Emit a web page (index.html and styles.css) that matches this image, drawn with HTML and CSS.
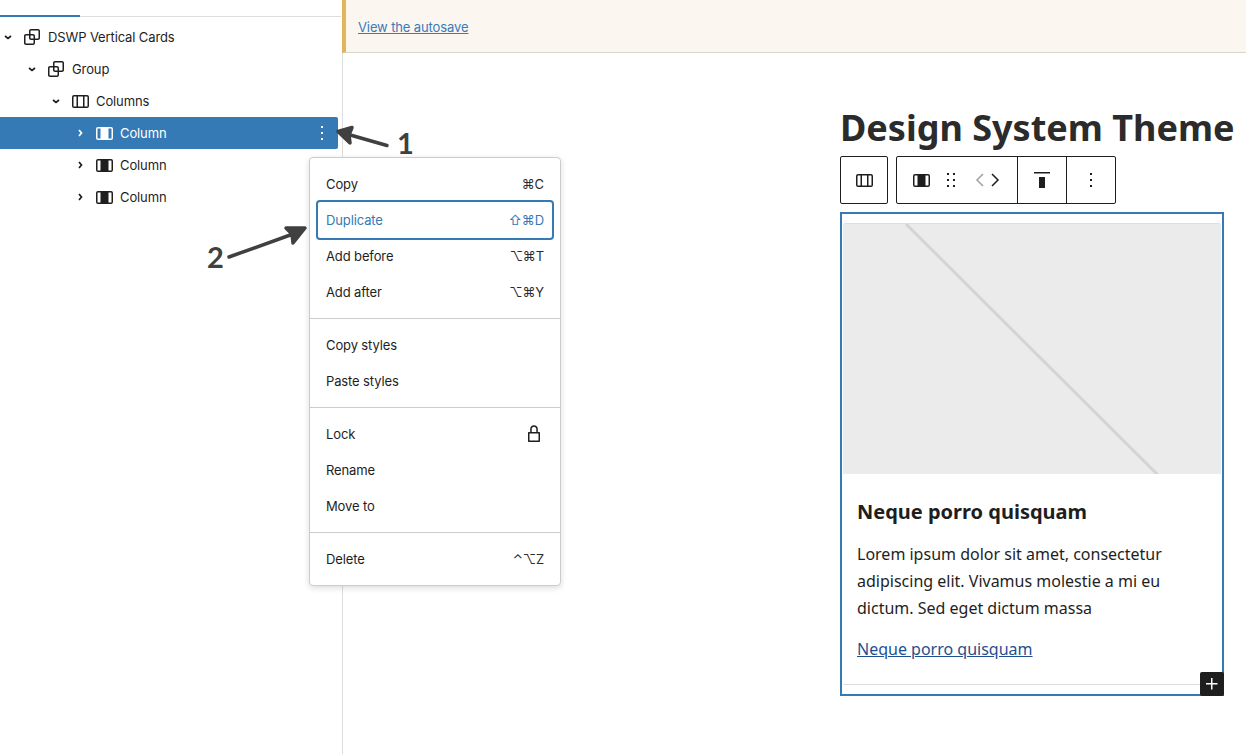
FILE: index.html
```html
<!DOCTYPE html>
<html lang="en">
<head>
<meta charset="utf-8">
<title>List view block menu</title>
<link rel="stylesheet" href="styles.css">
</head>
<body>
<div class="app">
  <aside class="sidebar">
    <div class="tabs"><span class="tab-active"></span></div>
    <ul class="tree">
      <li class="row level-1">
        <svg class="chev" viewBox="0 0 16 16"><path d="M5 7l3 2.500L11 7"/></svg>
        <svg class="icon" viewBox="0 0 24 24"><path d="M18 4h-7c-1.100 0-2 .9-2 2v3H6c-1.100 0-2 .9-2 2v7c0 1.100.9 2 2 2h7c1.100 0 2-.9 2-2v-3h3c1.100 0 2-.9 2-2V6c0-1.100-.9-2-2-2zm-4.500 14c0 .3-.2.5-.5.5H6c-.3 0-.5-.2-.5-.5v-7c0-.3.2-.5.5-.5h3V13c0 1.100.9 2 2 2h2.500v3zm0-4.500H11c-.3 0-.5-.2-.5-.5v-2.500H13c.3 0 .5.2.5.5v2.500zm5-.5c0 .3-.2.5-.5.5h-3V11c0-1.100-.9-2-2-2h-2.500V6c0-.3.2-.5.5-.5h7c.3 0 .5.2.5.5v7z"/></svg>
        <span>DSWP Vertical Cards</span>
      </li>
      <li class="row level-2">
        <svg class="chev" viewBox="0 0 16 16"><path d="M5 7l3 2.500L11 7"/></svg>
        <svg class="icon" viewBox="0 0 24 24"><path d="M18 4h-7c-1.100 0-2 .9-2 2v3H6c-1.100 0-2 .9-2 2v7c0 1.100.9 2 2 2h7c1.100 0 2-.9 2-2v-3h3c1.100 0 2-.9 2-2V6c0-1.100-.9-2-2-2zm-4.500 14c0 .3-.2.5-.5.5H6c-.3 0-.5-.2-.5-.5v-7c0-.3.2-.5.5-.5h3V13c0 1.100.9 2 2 2h2.500v3zm0-4.500H11c-.3 0-.5-.2-.5-.5v-2.500H13c.3 0 .5.2.5.5v2.500zm5-.5c0 .3-.2.5-.5.5h-3V11c0-1.100-.9-2-2-2h-2.500V6c0-.3.2-.5.5-.5h7c.3 0 .5.2.5.5v7z"/></svg>
        <span>Group</span>
      </li>
      <li class="row level-3">
        <svg class="chev" viewBox="0 0 16 16"><path d="M5 7l3 2.500L11 7"/></svg>
        <svg class="icon" viewBox="0 0 24 24"><path fill-rule="evenodd" d="M15 7.500h-5v10h5v-10Zm1.500 0v10H19a.5.5 0 0 0 .5-.5V8a.5.5 0 0 0-.5-.5h-2.500ZM6 7.500h2.500v10H6a.5.5 0 0 1-.5-.5V8a.5.5 0 0 1 .5-.5ZM6 6h13a2 2 0 0 1 2 2v9a2 2 0 0 1-2 2H6a2 2 0 0 1-2-2V8a2 2 0 0 1 2-2Z"/></svg>
        <span>Columns</span>
      </li>
      <li class="row level-4 selected">
        <svg class="chev" viewBox="0 0 16 16"><path d="M7 5l2.500 3L7 11"/></svg>
        <svg class="icon" viewBox="0 0 24 24"><path fill-rule="evenodd" d="M6 6h13a2 2 0 0 1 2 2v9a2 2 0 0 1-2 2H6a2 2 0 0 1-2-2V8a2 2 0 0 1 2-2Zm0 1.500a.5.5 0 0 0-.5.5v9a.5.5 0 0 0 .5.5h2.500v-10H6Zm10.500 0v10H19a.5.5 0 0 0 .5-.5V8a.5.5 0 0 0-.5-.5h-2.500Z"/></svg>
        <span class="row-label">Column</span>
        <svg class="icon" viewBox="0 0 24 24"><path d="M13 19h-2v-2h2v2zm0-6h-2v-2h2v2zm0-6h-2V5h2v2z"/></svg>
      </li>
      <li class="row level-4">
        <svg class="chev" viewBox="0 0 16 16"><path d="M7 5l2.500 3L7 11"/></svg>
        <svg class="icon" viewBox="0 0 24 24"><path fill-rule="evenodd" d="M6 6h13a2 2 0 0 1 2 2v9a2 2 0 0 1-2 2H6a2 2 0 0 1-2-2V8a2 2 0 0 1 2-2Zm0 1.500a.5.5 0 0 0-.5.5v9a.5.5 0 0 0 .5.5h2.500v-10H6Zm10.500 0v10H19a.5.5 0 0 0 .5-.5V8a.5.5 0 0 0-.5-.5h-2.500Z"/></svg>
        <span>Column</span>
      </li>
      <li class="row level-4">
        <svg class="chev" viewBox="0 0 16 16"><path d="M7 5l2.500 3L7 11"/></svg>
        <svg class="icon" viewBox="0 0 24 24"><path fill-rule="evenodd" d="M6 6h13a2 2 0 0 1 2 2v9a2 2 0 0 1-2 2H6a2 2 0 0 1-2-2V8a2 2 0 0 1 2-2Zm0 1.500a.5.5 0 0 0-.5.5v9a.5.5 0 0 0 .5.5h2.500v-10H6Zm10.500 0v10H19a.5.5 0 0 0 .5-.5V8a.5.5 0 0 0-.5-.5h-2.500Z"/></svg>
        <span>Column</span>
      </li>
    </ul>
  </aside>

  <main class="main">
    <div class="notice">
      <a class="notice-link" href="#">View the autosave</a>
    </div>
    <div class="canvas">
      <h1 class="title">Design System Theme</h1>
      <div class="toolbar">
        <div class="tool-group tool-parent">
          <svg class="icon" viewBox="0 0 24 24"><path fill-rule="evenodd" d="M15 7.500h-5v10h5v-10Zm1.500 0v10H19a.5.5 0 0 0 .5-.5V8a.5.5 0 0 0-.5-.5h-2.500ZM6 7.500h2.500v10H6a.5.5 0 0 1-.5-.5V8a.5.5 0 0 1 .5-.5ZM6 6h13a2 2 0 0 1 2 2v9a2 2 0 0 1-2 2H6a2 2 0 0 1-2-2V8a2 2 0 0 1 2-2Z"/></svg>
        </div>
        <div class="tool-group">
          <div class="tool-section tool-block">
            <svg class="icon" viewBox="0 0 24 24"><path fill-rule="evenodd" d="M6 6h13a2 2 0 0 1 2 2v9a2 2 0 0 1-2 2H6a2 2 0 0 1-2-2V8a2 2 0 0 1 2-2Zm0 1.500a.5.5 0 0 0-.5.5v9a.5.5 0 0 0 .5.5h2.500v-10H6Zm10.500 0v10H19a.5.5 0 0 0 .5-.5V8a.5.5 0 0 0-.5-.5h-2.500Z"/></svg>
            <svg class="icon drag" viewBox="0 0 24 24"><path d="M8 7h2V5H8v2zm0 6h2v-2H8v2zm0 6h2v-2H8v2zm6-14v2h2V5h-2zm0 8h2v-2h-2v2zm0 6h2v-2h-2v2z"/></svg>
            <svg class="arrow-btn arrow-prev" viewBox="0 0 12 16"><path d="M9 2L3 8l6 6"/></svg>
            <svg class="arrow-btn arrow-next" viewBox="0 0 12 16"><path d="M3 2l6 6-6 6"/></svg>
          </div>
          <div class="tool-section tool-align">
            <svg class="icon" viewBox="0 0 24 24"><path d="M9 20h6V9H9v11zM4 4v1.500h16V4H4z"/></svg>
          </div>
          <div class="tool-section tool-more">
            <svg class="icon" viewBox="0 0 24 24"><path d="M13 19h-2v-2h2v2zm0-6h-2v-2h2v2zm0-6h-2V5h2v2z"/></svg>
          </div>
        </div>
      </div>

      <section class="block-outline">
        <article class="card">
          <svg class="placeholder" viewBox="0 0 378 250" preserveAspectRatio="none">
            <line x1="63" y1="0" x2="315" y2="251"/>
          </svg>
          <div class="card-body">
            <h2 class="card-title">Neque porro quisquam</h2>
            <p class="card-text">Lorem ipsum dolor sit amet, consectetur adipiscing elit. Vivamus molestie a mi eu dictum. Sed eget dictum massa</p>
            <a class="card-link" href="#">Neque porro quisquam</a>
          </div>
        </article>
        <div class="add-block">
          <svg viewBox="0 0 24 24"><path d="M11 12.500V17.500H12.500V12.500H17.500V11H12.500V6H11V11H6V12.500H11Z"/></svg>
        </div>
      </section>
    </div>
  </main>

  <div class="menu">
    <div class="menu-group">
      <div class="menu-item"><span>Copy</span><span class="keys">⌘C</span></div>
      <div class="menu-item focused"><span>Duplicate</span><span class="keys">⇧⌘D</span></div>
      <div class="menu-item"><span>Add before</span><span class="keys">⌥⌘T</span></div>
      <div class="menu-item"><span>Add after</span><span class="keys">⌥⌘Y</span></div>
    </div>
    <div class="menu-group">
      <div class="menu-item"><span>Copy styles</span></div>
      <div class="menu-item"><span>Paste styles</span></div>
    </div>
    <div class="menu-group">
      <div class="menu-item"><span>Lock</span>
        <svg class="lock" viewBox="0 0 24 24"><path d="M17 10h-1.200V7c0-2.100-1.700-3.800-3.800-3.800-2.100 0-3.800 1.700-3.800 3.800v3H7c-.6 0-1 .4-1 1v8c0 .6.4 1 1 1h10c.6 0 1-.4 1-1v-8c0-.6-.4-1-1-1zm-7.300-3c0-1.300 1-2.300 2.300-2.300s2.300 1 2.300 2.300v3H9.700V7zm6.800 11.500h-9v-7h9v7z"/></svg>
      </div>
      <div class="menu-item"><span>Rename</span></div>
      <div class="menu-item"><span>Move to</span></div>
    </div>
    <div class="menu-group">
      <div class="menu-item"><span>Delete</span><span class="keys">⌃⌥Z</span></div>
    </div>
  </div>

  <svg class="callout callout-one" viewBox="0 0 60 24"><path d="M52 16.500L17 6.500M3 2.500L17 -1.500L14 6L15 14Z"/></svg>
  <span class="callout-num num-one">1</span>
  <svg class="callout callout-two" viewBox="0 0 84 36"><path d="M4 32L68 9M80 3L61 3L67 9L68 18Z"/></svg>
  <span class="callout-num num-two">2</span>
</div>
</body>
</html>
```
FILE: styles.css
```css
* { box-sizing: border-box; }
html, body { margin: 0; height: 100%; background: #fff; overflow: hidden; }
body { font-family: Inter, "Liberation Sans", sans-serif; font-size: 13px; letter-spacing: -0.12px; color: #1e1e1e; }
.app { position: relative; display: grid; grid-template-columns: 343px 1fr; width: 1246px; height: 754px; overflow: hidden; }

.sidebar { border-right: 1px solid #ddd; height: 754px; padding-right: 4px; }
.tabs { position: relative; height: 17px; margin-right: -3px; border-bottom: 1px solid #ddd; }
.tab-active { position: absolute; left: 0; bottom: -1px; width: 80px; height: 2px; background: #3579b5; }
.tree { list-style: none; margin: 4px 0 0; padding: 0; }
.row { display: flex; align-items: center; height: 32px; white-space: nowrap; }
.row svg { flex: none; fill: currentColor; }
.level-2 { padding-left: 24px; }
.level-3 { padding-left: 48px; }
.level-4 { padding-left: 72px; }
.chev { width: 16px; height: 16px; margin-right: 4px; }
.row .chev { fill: none; stroke: currentColor; stroke-width: 1.700; }
.icon { width: 24px; height: 24px; fill: currentColor; display: block; }
.row .icon + span { margin-left: 4px; }
.selected { background: #3579b5; color: #fff; border-radius: 0 2px 2px 0; padding-right: 4px; }
.row-label { flex: 1; }

.main { min-width: 0; }
.notice { height: 53px; margin-left: -1px; padding: 17px 12px 0; background: #fbf6f0; border-left: 4px solid #e2b45c; border-bottom: 1px solid #d8d3cb; }
.notice-link { display: block; line-height: 20px; color: #3a7bb8; text-decoration: underline; }

.canvas { padding: 51px 0 0 497px; font-family: "Noto Sans", sans-serif; letter-spacing: 0; }
.title { margin: 0; font-size: 36px; line-height: 48px; font-weight: 700; color: #2b2b2b; white-space: nowrap; }
.toolbar { display: flex; gap: 8px; margin-top: 4px; height: 48px; }
.tool-group { display: flex; height: 48px; border: 1px solid #1e1e1e; border-radius: 2px; background: #fff; }
.tool-parent { width: 48px; align-items: center; justify-content: center; }
.tool-section { display: flex; align-items: center; height: 100%; }
.tool-block { width: 121px; padding-left: 12px; border-right: 1px solid #1e1e1e; }
.drag { margin-left: 6px; }
.arrow-btn { width: 12px; height: 16px; fill: none; stroke-width: 1.500; stroke: #1e1e1e; }
.arrow-prev { margin-left: 11px; stroke: #a0a0a0; }
.arrow-next { margin-left: 3px; }
.tool-align { width: 49px; justify-content: center; border-right: 1px solid #1e1e1e; }
.tool-more { width: 48px; justify-content: center; }

.block-outline { position: relative; width: 384px; height: 484px; margin-top: 8px; padding: 9px 0; border: 2px solid #3579b5; }
.card { height: 462px; border: 1px solid #ddd; border-left-color: transparent; border-right-color: transparent; border-radius: 4px; background: #fff; }
.placeholder { display: block; width: 100%; height: 250px; background: #ebebeb; }
.placeholder line { stroke: #d4d4d4; stroke-width: 3; }
.card-body { padding: 22px 14px 0; }
.card-title { margin: 0; font-size: 20px; line-height: 32px; font-weight: 700; color: #1e1e1e; }
.card-text { margin: 13px 0 0; font-size: 16px; line-height: 27px; color: #1e1e1e; }
.card-link { display: block; margin-top: 14px; font-size: 16px; line-height: 27px; color: #1f4f8f; text-decoration: underline; }
.add-block { position: absolute; right: -2px; bottom: -2px; width: 24px; height: 24px; background: #1e1e1e; border-radius: 2px; }
.add-block svg { display: block; width: 24px; height: 24px; fill: #fff; }

.menu { position: absolute; left: 309px; top: 157px; width: 252px; background: #fff; border: 1px solid #ccc; border-radius: 4px; box-shadow: 0 2px 6px rgba(0,0,0,.14); }
.menu-group { padding: 8px; border-top: 1px solid #ccc; }
.menu-group:first-child { border-top: 0; }
.menu-item { display: flex; align-items: center; justify-content: space-between; height: 36px; padding: 0 8px; border-radius: 2px; }
.keys { font-family: Inter, "DejaVu Sans", sans-serif; font-size: 13px; color: #2c2c2c; }
.focused { color: #3579b5; outline: 2px solid #3579b5; border-radius: 2px; }
.focused .keys { color: #3579b5; }
.lock { width: 24px; height: 24px; margin-right: -2px; fill: #1e1e1e; }

.callout { position: absolute; fill: #404040; stroke: #404040; stroke-width: 3.500; stroke-linecap: round; stroke-linejoin: round; overflow: visible; }
.callout-one { left: 335px; top: 129px; width: 60px; height: 24px; }
.callout-two { left: 225px; top: 225px; width: 84px; height: 36px; }
.callout-num { position: absolute; font-family: Lato, sans-serif; font-weight: 700; font-size: 29px; line-height: 34px; letter-spacing: 0; color: #404040; }
.num-one { left: 397px; top: 126px; }
.num-two { left: 207px; top: 240px; }
```
